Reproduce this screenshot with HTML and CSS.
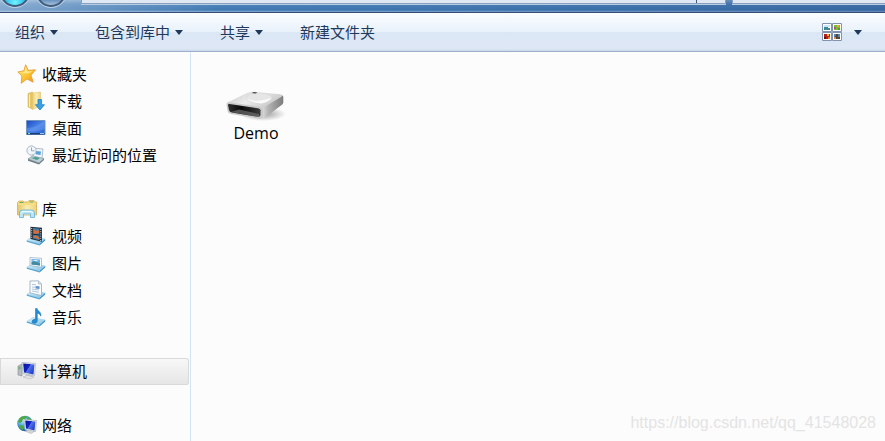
FILE: index.html
```html
<!DOCTYPE html>
<html lang="zh-CN">
<head>
<meta charset="utf-8">
<title>计算机</title>
<link rel="stylesheet" href="styles.css">
</head>
<body>
<svg class="defs" aria-hidden="true">
  <defs>
    <linearGradient id="gold" x1="0" y1="0" x2="1" y2="1"><stop offset="0" stop-color="#fff08a"/><stop offset=".55" stop-color="#fbc332"/><stop offset="1" stop-color="#ee8a1c"/></linearGradient>
    <linearGradient id="paper" x1="0" y1="0" x2="1" y2="0"><stop offset="0" stop-color="#e5c76a"/><stop offset=".5" stop-color="#fbedb0"/><stop offset="1" stop-color="#efd27c"/></linearGradient>
    <linearGradient id="screen" x1="0" y1="0" x2="1" y2="1"><stop offset="0" stop-color="#1b46c4"/><stop offset=".5" stop-color="#4a84e6"/><stop offset="1" stop-color="#2a60d0"/></linearGradient>
    <linearGradient id="monitor" x1="0" y1="0" x2="1" y2=".6"><stop offset="0" stop-color="#0716a0"/><stop offset=".5" stop-color="#1524c4"/><stop offset=".55" stop-color="#5374e8"/><stop offset="1" stop-color="#2440c8"/></linearGradient>
    <linearGradient id="tray" x1="0" y1="0" x2="1" y2="1"><stop offset="0" stop-color="#e6f7fd"/><stop offset="1" stop-color="#79bfe3"/></linearGradient>
    <linearGradient id="metal" x1="0" y1="0" x2="1" y2=".4"><stop offset="0" stop-color="#c4c4c4"/><stop offset=".5" stop-color="#ececec"/><stop offset="1" stop-color="#c8c8c8"/></linearGradient>
    <linearGradient id="side" x1="0" y1="0" x2="1" y2="0"><stop offset="0" stop-color="#e9e9e9"/><stop offset=".35" stop-color="#b4b4b4"/><stop offset="1" stop-color="#7c7c7c"/></linearGradient>
    <linearGradient id="slot" x1="0" y1="0" x2="1" y2="0"><stop offset="0" stop-color="#303030"/><stop offset=".4" stop-color="#080808"/><stop offset="1" stop-color="#3d3d3d"/></linearGradient>
    <radialGradient id="earth" cx=".35" cy=".3" r=".75"><stop offset="0" stop-color="#c6efff"/><stop offset=".5" stop-color="#3fa1dc"/><stop offset="1" stop-color="#135091"/></radialGradient>
    <radialGradient id="shade"><stop offset="0" stop-color="#555555" stop-opacity=".6"/><stop offset="1" stop-color="#555555" stop-opacity="0"/></radialGradient>
    <g id="base"><path d="M.8 14.5 7 10.5l12.2 2.6-5.7 4.8z" fill="url(#tray)" stroke="#9bcde6" stroke-width=".6"/><path d="m.8 14.5 12.7 3.4v1.6L.8 15.8z" fill="#57a5d3"/><path d="m13.5 17.9 5.7-4.8v1.4l-5.7 5z" fill="#348abf"/></g>
  </defs>
</svg>

<header class="frame">
  <div class="history">
    <button class="orb orb-back" aria-label="后退"></button>
    <button class="orb orb-forward" aria-label="前进"></button>
  </div>
  <div class="address"><span class="address-end"></span></div>
  <div class="search"></div>
</header>

<nav class="toolbar">
  <button class="command">组织<span class="arrow"></span></button>
  <button class="command">包含到库中<span class="arrow"></span></button>
  <button class="command">共享<span class="arrow"></span></button>
  <button class="command">新建文件夹</button>
  <button class="command view" aria-label="更改您的视图">
    <svg width="20" height="18" viewBox="0 0 20 18">
      <g fill="#fff" stroke="#8193ad"><path d="M.5.5h9v8h-9zM10.5.5h9v8h-9zM.5 9.5h9v8h-9zM10.5 9.5h9v8h-9z"/></g>
      <path d="M2 2h6v2H2z" fill="#c5e6f6"/><path d="M2 4h4v1h2v2H2z" fill="#388b91"/>
      <path d="M12 2h6v5h-6z" fill="#7bbd35"/><path d="M12 4h2v2h-2z" fill="#b64c80"/><path d="M15 2h2v2h-2z" fill="#e7ab32"/><path d="M16 5h2v2h-2z" fill="#4f9935"/>
      <path d="M2 11h6v5H2z" fill="#b32116"/><path d="M5 11h2v2H5z" fill="#f2b232"/><path d="M2 14h2v2H2z" fill="#601313"/><path d="M6 14h2v2H6z" fill="#f17d25"/>
      <path d="M12 11h6v5h-6z" fill="#5685b7"/><path d="M14 11h2v3h2v2h-5v-3h1z" fill="#554638"/><path d="M12 14h2v2h-2z" fill="#d78c49"/>
    </svg>
  </button>
  <button class="command more" aria-label="更多选项"><span class="arrow"></span></button>
</nav>

<div class="body">
  <aside class="sidebar">
    <section class="group">
      <a class="item" href="#"><svg class="icon" viewBox="0 0 20 20"><path d="m8.6.7 2.7 5.6 7.3-.5-4.6 5.4 2.2 7-6.3-3.2-5.7 4.3.7-7.3L.8 8l6.1-1.3z" fill="url(#gold)" stroke="#e3982c" stroke-width=".8" stroke-linejoin="round"/><path d="m8.600 3 1.800 4.400 5.400-.3-4.400 2.300L3 8.700l4.600-1z" fill="#fff3a0" opacity=".7"/></svg>收藏夹</a>
      <a class="item sub" href="#"><svg class="icon" viewBox="0 0 20 20"><path d="M2 2.500 6.500 1v17L2 16z" fill="#e6c66a" stroke="#cda94c" stroke-width=".5"/><path d="M6 2.200 14.500 1v14.500L6 18.500z" fill="url(#paper)" stroke="#d9bb65" stroke-width=".5"/><path d="M3.500 3.500v12.300" stroke="#fff4bf"/><path d="M12 8.500h3.600v5.200h2.900L14 19l-4.600-5.300H12z" fill="#3aa0e4" stroke="#1976ba" stroke-width=".7"/></svg>下载</a>
      <a class="item sub" href="#"><svg class="icon" viewBox="0 0 20 20"><path d="M.5 2.500h18.500v14H.5z" fill="url(#screen)" stroke="#7294bd"/><path d="M1 15h17.500v1.500H1z" fill="#173c74"/><path d="M2 15h2v1H2z" fill="#73e2b1"/><path d="M14 15h4v1h-4z" fill="#99c6ed"/><path d="M1 10C9 10 15 6 18.500 3v8C13 14 6 13 1 13z" fill="#91baff" opacity=".25"/></svg>桌面</a>
      <a class="item sub" href="#"><svg class="icon" viewBox="0 0 20 20"><path d="m2 14 5-3.500 11 3-5 4.500z" fill="#bad0d8" stroke="#83949b" stroke-width=".7"/><path d="m2 14 11 4v1.500L2 15.800zM13 18l5-4.500V15l-5 4.500z" fill="#727f87"/><path d="m8 3 9 1-1 9-9-2z" fill="#edf6fb" stroke="#90a8bd" stroke-width=".7"/><path d="m10 6 5 .6-.5 3.400-5-.8z" fill="#5aa1dc"/><path d="m5 13 6 2 3-2-4-1z" fill="#4d9b8c"/><circle cx="5.500" cy="5.500" r="4.600" fill="#f0f6fa" stroke="#a9b8c4"/><path d="M5.500 2.500v3.300h3" fill="none" stroke="#7b93a8" stroke-width=".8"/></svg>最近访问的位置</a>
    </section>
    <section class="group">
      <a class="item" href="#"><svg class="icon" viewBox="0 0 20 20"><path d="M.5 3.500 2 2h4l1 1h4l1-1.500h5L18 3h1.500v13H.5z" fill="#f6dc83" stroke="#d4ad4e" stroke-width=".8"/><path d="M2.500 3.500h4M12.500 3h4" stroke="#60ad65"/><path d="M1 6h18v10H1z" fill="url(#paper)"/><path d="M2.500 18.500V14q0-3 3-3h9q3 0 3 3v4.500h-4V15h-7v3.500z" fill="#b9e6f8" stroke="#64aed5" stroke-width=".8"/><path d="M4 14q0-1.500 2-1.500h8q2 0 2 1.500" stroke="#edfaff" fill="none"/></svg>库</a>
      <a class="item sub" href="#"><svg class="icon" viewBox="0 0 20 20"><use href="#base"/><path d="m4.500.8 11.500 1v14L4.500 13z" fill="#202c38"/><path d="m7 2 6.500.5v11.700L7 12.600z" fill="#397cb2"/><path d="m8 3 2 2 3-1v3L8 8zM7 11l3-2 3.500 3v1.500z" fill="#d76f35"/><path d="M7 8.300 13.500 9" stroke="#172432"/><path d="M5.700 2v11M14.800 3v12" stroke="#d6e7ee" stroke-width="1" stroke-dasharray="1 1.200"/></svg>视频</a>
      <a class="item sub" href="#"><svg class="icon" viewBox="0 0 20 20"><use href="#base"/><path d="m4 4.500 11.500.8v9L4 12.600z" fill="#f8fcff" stroke="#90aac0" stroke-width=".7"/><path d="m5.500 6 8.500.6v6L5.500 11.500z" fill="#6aafe8"/><path d="m5.500 9.500 3-1.500 5.500 2.500v2.100l-8.500-1.100z" fill="#418b9c"/><path d="m6 7 6 .3-2 1.300z" fill="#e6f7ff"/></svg>图片</a>
      <a class="item sub" href="#"><svg class="icon" viewBox="0 0 20 20"><use href="#base"/><path d="m4 1 8.500-.2L15.500 4v11.500L4 13z" fill="#f8fbff" stroke="#96a9bb" stroke-width=".8"/><path d="M12.500 1v3h3" fill="#d4e1eb" stroke="#96a9bb" stroke-width=".6"/><path d="m6 4.500 4 .2M6 7l3 .2M6 9l7 1M6 11l7 1.300" stroke="#a0bacf" stroke-width=".8"/><path d="m9.500 6 4 .3V9l-4-.5z" fill="#6490cf"/></svg>文档</a>
      <a class="item sub" href="#"><svg class="icon" viewBox="0 0 20 20"><use href="#base"/><path d="M9.500 1.500h1.600c.4 2.500 4.600 3.400 3.700 7.700-.6-2-2.200-2.800-3.500-3v7.500c0 3-5 3.400-5.200 1-.1-1.800 1.900-2.700 3.400-2.200z" fill="#258bd4" stroke="#146aac" stroke-width=".5"/></svg>音乐</a>
    </section>
    <section class="group">
      <a class="item selected" href="#" aria-current="page"><svg class="icon" viewBox="0 0 20 20"><path d="m1 5 4-2v12l-4-1z" fill="#b7bec2" stroke="#858c90" stroke-width=".6"/><path d="m1.500 6 2-.8v3l-2 .4z" fill="#66b56c"/><path d="m9 13-1 3 7 1 1-3z" fill="#c9cdd1"/><path d="m6 16 4-1.500 7 1.500-4 2z" fill="#e4e6e8" stroke="#a6abae" stroke-width=".5"/><path d="m5 1.500 13.500 1-1 12L6 12.500z" fill="#edf0f5" stroke="#a8b1bd" stroke-width=".7"/><path d="m6.200 2.600 11.200.8-.9 10L7 11.500z" fill="url(#monitor)"/></svg>计算机</a>
    </section>
    <section class="group">
      <a class="item" href="#"><svg class="icon" viewBox="0 0 20 20"><circle cx="8" cy="8.500" r="7.800" fill="url(#earth)"/><path d="M2 4c2-3 7-4 8-2L8 4 6 4 5 7 3 8 1 7zM3 10l4 1-1 4-3-2zM11 2l4 3-2 3-3-3z" fill="#50a93e"/><path d="m8 16 4-1.500 6 1.500-4 2.500z" fill="#d6dadd" stroke="#a0a6aa" stroke-width=".5"/><path d="m7 4.500 12.500 1-1 11L8 14.500z" fill="#edf0f5" stroke="#a8b1bd" stroke-width=".7"/><path d="m8.200 5.600 10.200.8-.9 9L9 13.500z" fill="url(#monitor)"/></svg>网络</a>
    </section>
  </aside>
  <main class="content">
    <a class="drive" href="#">
      <svg width="60" height="34" viewBox="0 0 60 34">
        <ellipse cx="37" cy="25" rx="23" ry="7" fill="url(#shade)"/>
        <path d="m34 18.500 22.500-12q1 .5.800 2v5q0 1.500-2 2.800L39 28.500q-2 1.500-5 1.200z" fill="url(#side)"/>
        <path d="M1.500 13.500 22 3.500q2-1 5-.8l27 2.600q4 .7 1.500 2.500L38 18.200q-2 1.200-5 1z" fill="url(#metal)"/>
        <ellipse cx="33" cy="9" rx="13" ry="5" fill="#e6e6e6" stroke="#d0d0d0" stroke-width=".5"/>
        <path d="M21 10q10 4 24-1-5 7-14 5-7-1-10-4z" fill="#fafafa"/>
        <path d="m25.500 4 2.500-1 3.500.4-2 1.200z" fill="#414141"/>
        <path d="M.5 15q0-2 2.500-1.700l30 4.500q4 .5 4 3V27q0 3-4 2.700L5 25q-3-.5-3.500-3z" fill="#c9c9c9"/>
        <path d="M2 16q0-1.200 1.500-1L32 19.300q2.500.4 2.500 2V26q0 2-2.500 1.800L6 23.500q-2.500-.5-3-2.500z" fill="url(#slot)"/>
        <path d="m5 23 8-2.500L33 25v2.800q-1 .2-2 0z" fill="#777" opacity=".65"/>
      </svg>
      <span>Demo</span>
    </a>
    <span class="watermark">https://blog.csdn.net/qq_41548028</span>
  </main>
</div>
</body>
</html>
```
FILE: styles.css
```css
* { box-sizing: border-box; }

body {
  margin: 0;
  min-height: 100vh;
  display: flex;
  flex-direction: column;
  overflow: hidden;
  background: #fcfcfc;
  color: #000;
  font: 15px/26px "Open Sans", "Noto Sans CJK SC", sans-serif;
}

button {
  border: 0;
  padding: 0;
  background: none;
  color: inherit;
  font: inherit;
}

a { color: inherit; text-decoration: none; }
svg { display: block; flex: none; }

.defs { position: absolute; width: 0; height: 0; }

.frame {
  display: flex;
  align-items: flex-end;
  height: 13px;
  overflow: hidden;
  border-bottom: 1px solid #334d75;
  background:
    linear-gradient(to right, rgb(255 255 255 / 35%), transparent 25%, rgb(20 50 110 / 25%)),
    linear-gradient(#7ba3cc 0, #4e84ba 4px, #4078b3 10px, #8bafd5 12px);
}

.history {
  display: flex;
  gap: 6px;
  width: 81px;
  padding-bottom: 5px;
}

.orb {
  width: 30px;
  height: 30px;
  border: 2px solid #435c7b;
  border-radius: 50%;
  box-shadow: 0 0 0 1px #b9d0e8;
}

.orb-back { background: radial-gradient(circle at 50% 90%, #6ff4ff, #20aee6 45%, #1673b7); }
.orb-forward { background: linear-gradient(#5784b4 75%, #a3bfdd); }

.address,
.search {
  height: 5px;
  margin-bottom: 8px;
  border: 1px solid #87a0bd;
  border-top: 0;
  background: #dfe8f3;
  box-shadow: 0 1px #b8cde4;
}

.address {
  display: flex;
  justify-content: flex-end;
  flex: 1;
  margin-right: 6px;
}

.address-end { width: 29px; border-left: 1px solid #3e5a7c; }
.search { width: 153px; border-right: 0; }

.toolbar {
  display: flex;
  align-items: center;
  gap: 37px;
  height: 39px;
  padding: 0 23px 0 15px;
  border-bottom: 1px solid #a0afc9;
  background: linear-gradient(#fbfdff, #e8f1fb 50%, #dce7f5 51%, #dde7f5 94%, #cbd8ea);
  color: #1e395b;
}

.command {
  display: flex;
  align-items: center;
  gap: 5px;
  white-space: nowrap;
}

.arrow {
  border: 4px solid transparent;
  border-top: 5px solid #1e395b;
  border-bottom: 0;
}

.view { margin-left: auto; }
.more { margin-left: -25px; }

.body { display: flex; flex: 1; }

.sidebar {
  flex: none;
  width: 191px;
  padding-top: 9px;
  border-right: 1px solid #d3e4f5;
}

.group { margin-bottom: 27px; }
.group:last-child { margin-bottom: 0; }

.item {
  display: flex;
  align-items: center;
  gap: 5px;
  height: 27px;
  margin-right: 1px;
  padding: 0 0 2px 17px;
}

.sub { gap: 6px; padding-left: 26px; }
.icon { width: 20px; height: 20px; }

.selected {
  border-radius: 0 3px 3px 0;
  background: linear-gradient(#f8f8f8, #e5e5e5);
  box-shadow: inset 0 0 0 1px #d9d9d9;
}

.content {
  position: relative;
  flex: 1;
  padding: 37px 35px;
}

.drive {
  display: flex;
  flex-direction: column;
  align-items: center;
  width: 60px;
  font-size: 16px;
  line-height: 20px;
}

.watermark {
  position: absolute;
  right: 9px;
  bottom: 5px;
  color: #e4e4e4;
  font-family: "Liberation Sans", sans-serif;
  font-size: 16px;
}
```
